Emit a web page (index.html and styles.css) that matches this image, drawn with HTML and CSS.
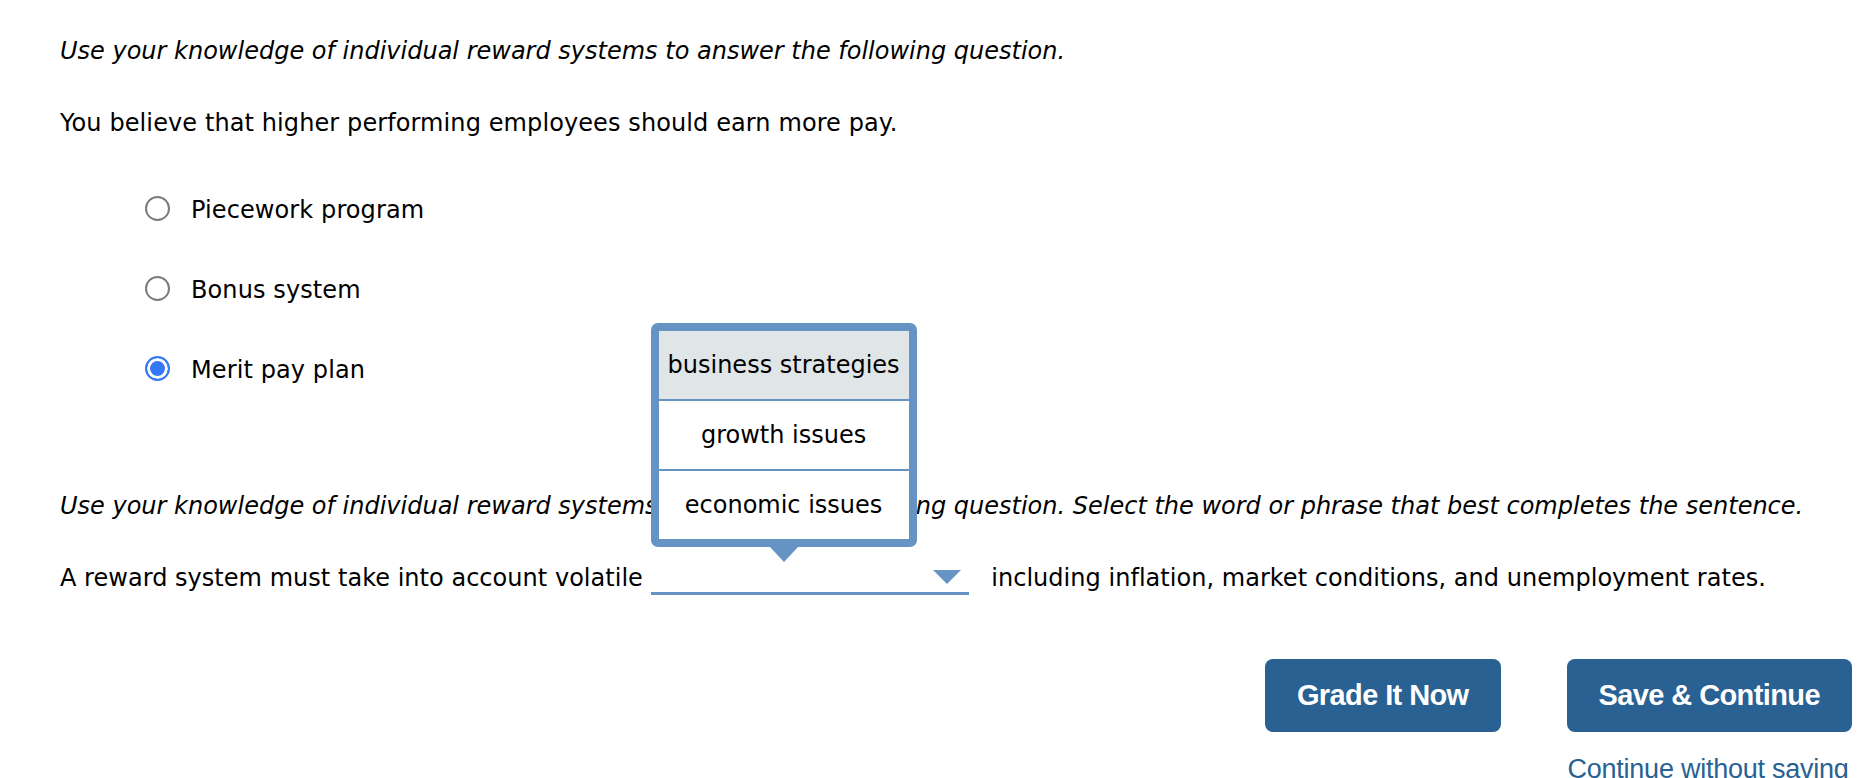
FILE: index.html
```html
<!DOCTYPE html>
<html lang="en">
<head>
<meta charset="utf-8">
<title>Individual reward systems</title>
<link rel="stylesheet" href="styles.css">
</head>
<body>
<div class="page">
  <p class="instr">Use your knowledge of individual reward systems to answer the following question.</p>
  <p class="stem">You believe that higher performing employees should earn more pay.</p>
  <ul class="choices">
    <li class="choice"><span class="radio"></span><span class="label">Piecework program</span></li>
    <li class="choice"><span class="radio"></span><span class="label">Bonus system</span></li>
    <li class="choice"><span class="radio checked"></span><span class="label">Merit pay plan</span></li>
  </ul>
  <p class="instr instr-second">Use your knowledge of individual reward systems to answer the following question. Select the word or phrase that best completes the sentence.</p>
  <div class="sentence">A reward system must take into account volatile <span class="dropdown"><span class="caret"></span><span class="menu"><span class="option active">business strategies</span><span class="option">growth issues</span><span class="option">economic issues</span></span></span> including inflation, market conditions, and unemployment rates.</div>
  <div class="actions">
    <button class="btn" type="button">Grade It Now</button>
    <div class="save-col">
      <button class="btn" type="button">Save &amp; Continue</button>
      <a class="skip" href="#">Continue without saving</a>
    </div>
  </div>
</div>
</body>
</html>
```
FILE: styles.css
```css
html, body {
  margin: 0;
  padding: 0;
  background: #fff;
  overflow: hidden;
}

body {
  font-family: "DejaVu Sans", Verdana, sans-serif;
  font-size: 24px;
  line-height: 28px;
  color: #000;
}

.page {
  padding: 37px 22px 0 60px;
}

p {
  margin: 0;
}

.instr {
  font-style: italic;
}

.stem {
  margin-top: 44px;
  letter-spacing: 0.1px;
}

.choices {
  list-style: none;
  margin: 59px 0 0;
  padding: 0 0 0 85px;
  display: flex;
  flex-direction: column;
  gap: 52px;
}

.choice {
  display: flex;
  align-items: flex-start;
  gap: 21px;
  letter-spacing: 0.1px;
}

.radio {
  box-sizing: border-box;
  width: 25px;
  height: 25px;
  border: 2px solid #7b7b7b;
  border-radius: 50%;
  background: #fff;
  flex: none;
}

.radio.checked {
  border-color: #3478f6;
  background: #3478f6;
  box-shadow: inset 0 0 0 3px #fff;
}

.instr-second {
  margin-top: 108px;
}

.sentence {
  margin-top: 44px;
  letter-spacing: 0.03px;
}

.dropdown {
  position: relative;
  display: inline-block;
  vertical-align: top;
  box-sizing: border-box;
  width: 318px;
  height: 31px;
  margin: 0 15px 0 0;
  border-bottom: 3px solid #6593c3;
}

.caret {
  position: absolute;
  right: 8px;
  top: 6px;
  width: 0;
  height: 0;
  border-left: 14px solid transparent;
  border-right: 14px solid transparent;
  border-top: 14px solid #6593c3;
}

.menu {
  position: absolute;
  left: 0;
  bottom: 45px;
  z-index: 2;
  display: flex;
  flex-direction: column;
  gap: 2px;
  width: 266px;
  box-sizing: border-box;
  border: 8px solid #6593c3;
  border-radius: 7px;
  background: #6593c3;
  letter-spacing: 0;
}

.menu::after {
  content: "";
  position: absolute;
  left: 50%;
  top: 100%;
  margin-left: -14px;
  margin-top: 8px;
  width: 0;
  height: 0;
  border-left: 14px solid transparent;
  border-right: 14px solid transparent;
  border-top: 15px solid #6593c3;
}

.option {
  display: block;
  height: 68px;
  line-height: 68px;
  text-align: center;
  background: #fff;
  white-space: nowrap;
}

.option.active {
  background: #e0e6e8;
}

.actions {
  display: flex;
  justify-content: flex-end;
  align-items: flex-start;
  gap: 66px;
  margin-top: 64px;
}

.save-col {
  display: flex;
  flex-direction: column;
  align-items: flex-start;
}

.btn {
  height: 73px;
  padding: 0 32px;
  border: none;
  border-radius: 8px;
  background: #286192;
  color: #fff;
  font-family: "Liberation Sans", Arial, sans-serif;
  font-weight: bold;
  font-size: 29px;
  letter-spacing: -0.6px;
  cursor: pointer;
}

.skip {
  margin-top: 22px;
  margin-left: 1px;
  font-family: "Liberation Sans", Arial, sans-serif;
  font-size: 27px;
  line-height: 30px;
  color: #286192;
  text-decoration: none;
  letter-spacing: -0.25px;
}
```
